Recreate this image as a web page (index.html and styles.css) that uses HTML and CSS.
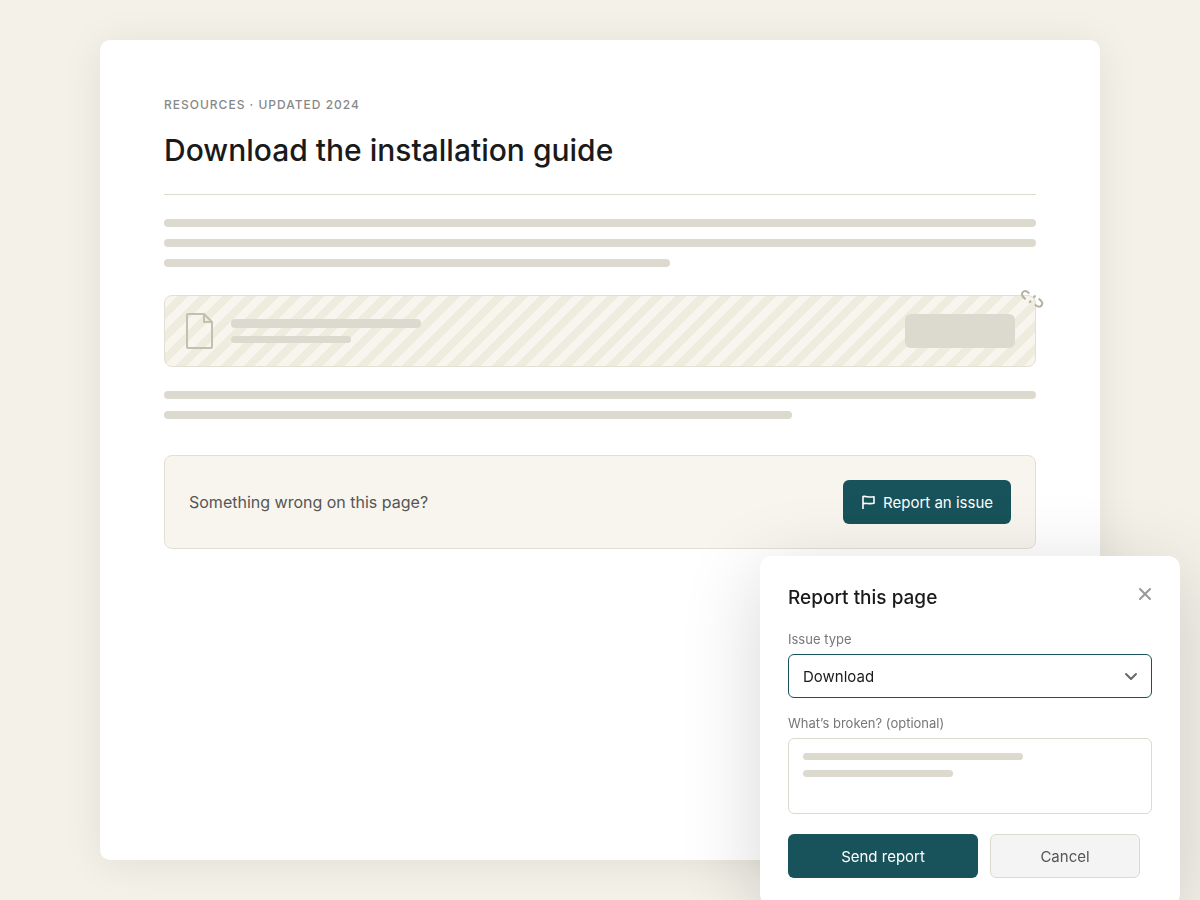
FILE: index.html
```html
<!DOCTYPE html>
<html lang="en">

<head>
    <meta charset="UTF-8" />
    <title>Download the installation guide</title>
    <meta name="viewport" content="width=device-width, initial-scale=1.0" />
    <link rel="stylesheet" href="styles.css">
</head>

<body>

    <main class="sheet">
        <div class="eyebrow">Resources · Updated 2024</div>
        <h1>Download the installation guide</h1>

        <div class="lines">
            <div class="line"></div>
            <div class="line"></div>
            <div class="line line-58"></div>
        </div>

        <!-- Broken download card -->
        <div class="download-card">
            <svg class="file-icon" width="28" height="36" viewBox="0 0 28 36" fill="none" stroke="#c4c0b0" stroke-width="2" stroke-linejoin="round">
                <path d="M3 1H19L27 9V34Q27 35 26 35H3Q2 35 2 34V2Q2 1 3 1M19 1V9H27" />
            </svg>
            <div class="file-lines">
                <div class="line file-name"></div>
                <div class="line file-meta"></div>
            </div>
            <div class="file-action"></div>
            <svg class="broken-link" width="24" height="24" viewBox="0 0 24 24" fill="none" stroke="#b8b0a0" stroke-width="2">
                <path d="M5.5 12.2L3 9.7C0.8 7.3 2.5 4 5.2 4C6.5 4 8 5 9.3 6.700" />
                <path d="M18.700 11.500L21.200 14C23.400 16.400 21.700 19.700 19 19.700C17.500 19.700 16.300 18.900 14.900 17.500" />
                <path d="M9.200 15.800L11 13.700M13.400 10.700L15.500 8.500" />
            </svg>
        </div>

        <div class="lines">
            <div class="line"></div>
            <div class="line line-72"></div>
        </div>

        <section class="callout">
            <p>Something wrong on this page?</p>
            <button type="button" class="btn primary-btn report-btn">
                <svg width="14" height="14" viewBox="0 0 14 14" fill="none" stroke="currentColor" stroke-width="1.6" stroke-linejoin="round">
                    <path d="M2 14V1.5C5 0.7 8 3 13 1.7V8.3C8 9.5 5 7.5 2 8.7" />
                </svg>
                Report an issue
            </button>
        </section>
    </main>

    <!-- Report dialog -->
    <form class="dialog" role="dialog" aria-labelledby="dialogTitle">
        <div class="dialog-header">
            <h2 id="dialogTitle">Report this page</h2>
            <button type="button" class="close-btn" aria-label="Close">
                <svg width="14" height="14" viewBox="0 0 14 14" fill="none" stroke="currentColor" stroke-width="2" stroke-linecap="round">
                    <path d="M2 2L12 12M12 2L2 12" />
                </svg>
            </button>
        </div>

        <label for="issueType">Issue type</label>
        <div class="field">
            <select id="issueType">
                <option>Download</option>
            </select>
            <svg class="chevron" width="14" height="10" viewBox="0 0 14 10" fill="none" stroke="#666" stroke-width="2" stroke-linecap="round" stroke-linejoin="round">
                <path d="M2 2L7 7L12 2" />
            </svg>
        </div>

        <label for="details">What’s broken? (optional)</label>
        <div class="field">
            <textarea id="details"></textarea>
            <div class="draft">
                <div class="line draft-long"></div>
                <div class="line draft-short"></div>
            </div>
        </div>

        <div class="btn-group">
            <button type="button" class="btn primary-btn send-btn">Send report</button>
            <button type="button" class="btn cancel-btn">Cancel</button>
        </div>
    </form>

</body>

</html>
```
FILE: styles.css
```css
* {
    box-sizing: border-box;
}

body {
    margin: 0;
    padding: 40px 100px;
    min-height: 100vh;
    display: flex;
    background: #f4f1e9;
    color: #1a1a1a;
    font-family: Inter, sans-serif;
}

h1,
h2,
p {
    margin: 0;
}

.sheet {
    flex: 1;
    min-width: 0;
    padding: 56px 64px;
    background: #fff;
    border-radius: 10px;
    box-shadow: 0 4px 40px rgba(0, 0, 0, 0.08);
}

.eyebrow {
    font-size: 12px;
    line-height: 18px;
    font-weight: 500;
    letter-spacing: 1px;
    text-transform: uppercase;
    color: #888;
}

h1 {
    margin-top: 16px;
    padding-bottom: 24px;
    border-bottom: 1px solid #dddccf;
    font-size: 30px;
    line-height: 40px;
    font-weight: 500;
}

.lines {
    display: flex;
    flex-direction: column;
    gap: 12px;
    margin: 24px 0;
}

.line {
    height: 8px;
    border-radius: 4px;
    background: #dcdace;
}

.line-58 {
    width: 58%;
}

.line-72 {
    width: 72%;
}

.download-card {
    position: relative;
    display: flex;
    align-items: center;
    gap: 18px;
    margin: 28px 0 24px;
    padding: 18px 20px;
    border: 1px solid #e3e0d3;
    border-radius: 8px;
    background: repeating-linear-gradient(-45deg, #f8f5ee 0 8px, #eeebdf 8px 16px);
}

.file-icon {
    display: block;
    margin: -1px 0;
}

.file-lines {
    flex: 1;
    display: flex;
    flex-direction: column;
    gap: 8px;
}

.file-name {
    width: 190px;
    height: 9px;
}

.file-meta {
    width: 120px;
    height: 7px;
}

.file-action {
    width: 110px;
    height: 34px;
    border-radius: 6px;
    background: #dcdace;
}

.broken-link {
    position: absolute;
    top: -9px;
    right: -9px;
}

.callout {
    display: flex;
    align-items: center;
    justify-content: space-between;
    margin-top: 36px;
    padding: 24px;
    border: 1px solid #e3e0d3;
    border-radius: 8px;
    background: #f8f5ee;
    font-size: 16px;
    color: #555;
}

.btn {
    display: flex;
    align-items: center;
    justify-content: center;
    gap: 8px;
    height: 44px;
    padding: 0 18px;
    border: none;
    border-radius: 6px;
    font-family: inherit;
    font-size: 15px;
    cursor: pointer;
}

.primary-btn {
    background: #18525a;
    color: #fff;
}

.dialog {
    position: fixed;
    right: 20px;
    bottom: -6px;
    width: 420px;
    padding: 28px;
    background: #fff;
    border-radius: 12px;
    box-shadow: 0 16px 80px rgba(0, 0, 0, 0.16);
}

.dialog-header {
    display: flex;
    align-items: flex-start;
    justify-content: space-between;
    margin-bottom: 18px;
}

h2 {
    font-size: 19px;
    line-height: 28px;
    font-weight: 500;
}

.close-btn {
    display: flex;
    padding: 3px 0;
    border: none;
    background: none;
    color: #999;
    cursor: pointer;
}

label {
    display: block;
    margin-bottom: 6px;
    font-size: 13px;
    line-height: 18px;
    color: #777;
}

.field {
    position: relative;
    margin-bottom: 16px;
}

select,
textarea {
    display: block;
    width: 100%;
    border: 1px solid #dcdace;
    border-radius: 6px;
    background: #fff;
    color: #1a1a1a;
    font-family: inherit;
    font-size: 15px;
}

select {
    height: 44px;
    padding: 0 14px;
    border-color: #18525a;
    appearance: none;
}

textarea {
    height: 76px;
    padding: 14px;
    resize: none;
}

.chevron {
    position: absolute;
    top: 18px;
    right: 14px;
    pointer-events: none;
}

.draft {
    position: absolute;
    top: 15px;
    left: 15px;
    display: flex;
    flex-direction: column;
    gap: 10px;
    pointer-events: none;
}

.draft .line {
    height: 7px;
}

.draft-long {
    width: 220px;
}

.draft-short {
    width: 150px;
}

.btn-group {
    display: flex;
    gap: 12px;
    margin-top: 20px;
}

.send-btn {
    width: 190px;
}

.cancel-btn {
    width: 150px;
    border: 1px solid #dcdace;
    background: #f4f4f4;
    color: #555;
}
```
